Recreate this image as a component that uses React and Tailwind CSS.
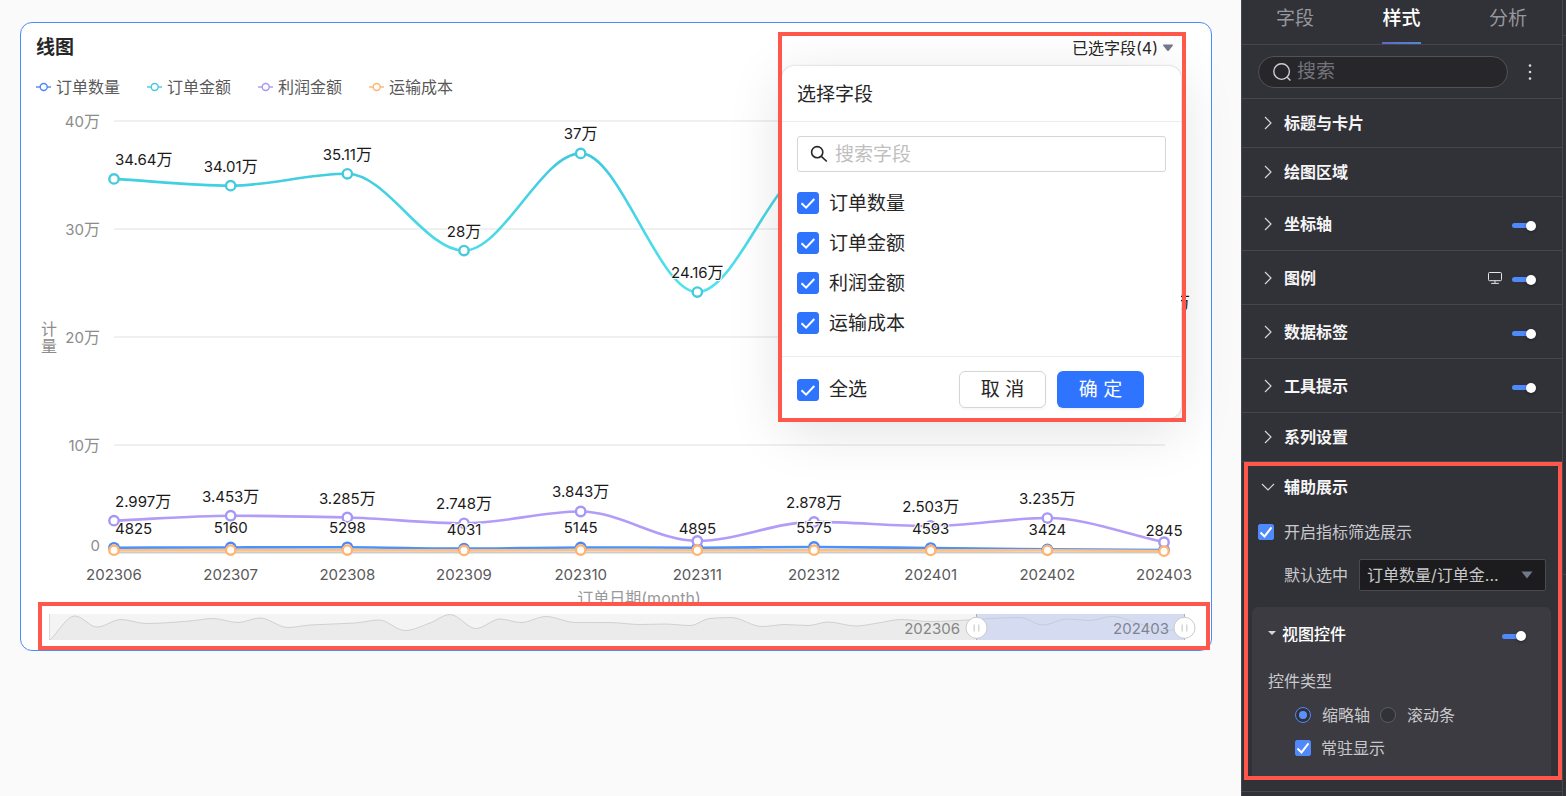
import React from "react";

const months = ["202306", "202307", "202308", "202309", "202310", "202311", "202312", "202401", "202402", "202403"];
const xAt = (i) => 114 + i * 116.67;
const yAt = (v) => 553 - v * 10.8;

const series = [
  {
    id: "orders",
    name: "订单数量",
    color: "#4c86fb",
    line: "#4b92ff",
    values: [0.4825, 0.516, 0.5298, 0.4031, 0.5145, 0.4895, 0.5575, 0.4593, 0.3424, 0.2845],
    labels: ["4825", "5160", "5298", "4031", "5145", "4895", "5575", "4593", "3424", "2845"],
  },
  {
    id: "amount",
    name: "订单金额",
    color: "#45cadc",
    line: "url(#amountLine)",
    values: [34.64, 34.01, 35.11, 28, 37, 24.16, 35.8, 30, 28, 21.4],
    labels: ["34.64万", "34.01万", "35.11万", "28万", "37万", "24.16万", "", "", "", "万"],
  },
  {
    id: "profit",
    name: "利润金额",
    color: "#a597f5",
    line: "#b39cf8",
    values: [2.997, 3.453, 3.285, 2.748, 3.843, 1.12, 2.878, 2.503, 3.235, 1.0],
    labels: ["2.997万", "3.453万", "3.285万", "2.748万", "3.843万", "", "2.878万", "2.503万", "3.235万", ""],
  },
  {
    id: "freight",
    name: "运输成本",
    color: "#ffb56f",
    line: "#ffc07f",
    values: [0.26, 0.27, 0.27, 0.24, 0.28, 0.26, 0.26, 0.24, 0.25, 0.17],
    labels: [],
  },
];

// Monotone cubic interpolation through the given points.
function curve(pts) {
  const n = pts.length;
  const d = [];
  for (let i = 0; i < n - 1; i++) d.push((pts[i + 1][1] - pts[i][1]) / (pts[i + 1][0] - pts[i][0]));
  const m = [d[0]];
  for (let i = 1; i < n - 1; i++) {
    m.push(d[i - 1] * d[i] <= 0 ? 0 : (2 * d[i - 1] * d[i]) / (d[i - 1] + d[i]));
  }
  m.push(d[n - 2]);
  let path = `M${pts[0][0]},${pts[0][1]}`;
  for (let i = 0; i < n - 1; i++) {
    const h = (pts[i + 1][0] - pts[i][0]) / 3;
    path += `C${pts[i][0] + h},${pts[i][1] + m[i] * h} ${pts[i + 1][0] - h},${pts[i + 1][1] - m[i + 1] * h} ${pts[i + 1][0]},${pts[i + 1][1]}`;
  }
  return path;
}

const overview = [
  [50, 640], [75, 616], [97, 627], [121, 619.5], [146, 623.5], [190, 621], [213, 618.5], [238, 622.5],
  [260, 618], [288, 627.5], [310, 625], [355, 623], [379, 620], [405, 630.5], [430, 623], [450, 614.5],
  [476, 628.5], [500, 619], [521, 622.5], [546, 616.5], [575, 622.5], [610, 622.6], [640, 624.5],
  [665, 624], [690, 625.5], [710, 618.5], [731, 617.5], [762, 626.5], [785, 624.5], [808, 625.5],
  [828, 622], [856, 626], [878, 623], [901, 619.5], [930, 621.5], [976, 619.5], [1000, 618],
  [1020, 617.5], [1043, 625], [1067, 619], [1090, 620.5], [1112, 616.5], [1140, 624], [1165, 630.5], [1185, 629],
];

// A figure with its unit character one size larger.
function Amount({ children }) {
  const [digits, rest] = String(children).split("万");
  return (
    <>
      {digits}
      {rest !== undefined && <tspan fontSize="16">万</tspan>}
    </>
  );
}

function Chart() {
  return (
    <svg viewBox="21 99 1190 503" className="block w-full overflow-visible" role="img" aria-label="线图">
      <defs>
        <linearGradient id="amountLine" gradientUnits="userSpaceOnUse" x1="0" y1="150" x2="0" y2="300">
          <stop offset="0" stopColor="#3ec9de" />
          <stop offset="1" stopColor="#4fe6ee" />
        </linearGradient>
      </defs>
      {[40, 30, 20, 10].map((v) => (
        <g key={v}>
          <line x1="114" x2="1165" y1={yAt(v)} y2={yAt(v)} stroke="#f0f0f0" strokeWidth="2" />
          <text x="100" y={yAt(v) + 6} textAnchor="end" fontSize="15" fill="#8c8c8c"><Amount>{`${v}万`}</Amount></text>
        </g>
      ))}
      <text x="100" y="551" textAnchor="end" fontSize="15" fill="#8c8c8c">0</text>
      <text x="49" y="335" textAnchor="middle" fontSize="16" fill="#8c8c8c">计</text>
      <text x="49" y="352" textAnchor="middle" fontSize="16" fill="#8c8c8c">量</text>
      <line x1="114" x2="1165" y1="552.5" y2="552.5" stroke="#cccccc" strokeWidth="2" />
      {series.map((s) => (
        <path key={s.id} d={curve(s.values.map((v, i) => [xAt(i), yAt(v)]))} fill="none" stroke={s.line} strokeWidth="2.6" />
      ))}
      {series.map((s) => (
        <g key={s.id} fill="#fff" stroke={s.color} strokeWidth="2.4">
          {s.values.map((v, i) => (
            <circle key={i} cx={xAt(i)} cy={yAt(v)} r="4.7" />
          ))}
        </g>
      ))}
      {series.map((s) => (
        <g key={s.id} fontSize="15" fill="#1a1a1a" stroke="#fff" strokeWidth="2" paintOrder="stroke" strokeLinejoin="round">
          {s.labels.map((t, i) => {
            const first = i === 0;
            const unit = t === "万";
            return (
              <text
                key={i}
                x={first ? 115 : unit ? 1190 : xAt(i)}
                y={yAt(s.values[i]) - 14}
                textAnchor={first ? "start" : unit ? "end" : "middle"}
              >
                <Amount>{t}</Amount>
              </text>
            );
          })}
        </g>
      ))}
      {months.map((m, i) => (
        <text key={m} x={xAt(i)} y="580" textAnchor="middle" fontSize="15" fill="#595959">{m}</text>
      ))}
      <text x="639" y="604" textAnchor="middle" fontSize="16" fill="#999">订单日期(month)</text>
    </svg>
  );
}

function RangeSlider() {
  const line = curve(overview);
  return (
    <div className="relative ml-[17px] mr-px border-4 border-[#ff574b] bg-white">
      <svg viewBox="42 606 1164 40" className="block w-full" aria-hidden="true">
        <rect x="49" y="614" width="1136" height="26" fill="#f4f4f4" />
        <path d={`${line}L1185,640L50,640Z`} fill="#ebebeb" />
        <line x1="49.5" x2="49.5" y1="614" y2="640" stroke="#d9d9d9" />
        <rect x="976" y="614" width="209" height="26" fill="#d5dcf2" />
        <path d={line} fill="none" stroke="#c4c6cc" strokeOpacity="0.75" strokeWidth="1" />
        {[976.5, 1184.5].map((x) => (
          <g key={x}>
            <line x1={x} x2={x} y1="614" y2="640" stroke="#aab0c0" />
            <circle cx={x} cy="627.8" r="10.5" fill="#fff" stroke="#cbcbcb" />
            <path d={`M${x - 2.3},624.5v7M${x + 2.3},624.5v7`} stroke="#cccccc" strokeWidth="1.2" />
          </g>
        ))}
        <text x="960" y="633.5" textAnchor="end" fontSize="15" fill="#868686">202306</text>
        <text x="1169" y="633.5" textAnchor="end" fontSize="15" fill="#7f8492">202403</text>
      </svg>
      <input type="range" aria-label="起始月份" defaultValue="80" className="absolute inset-0 h-full w-full cursor-pointer opacity-0" />
      <input type="range" aria-label="结束月份" defaultValue="100" className="absolute inset-0 h-full w-full cursor-pointer opacity-0" />
    </div>
  );
}

function FieldOption({ children }) {
  return (
    <label className="flex items-center gap-[10px]">
      <span className="grid size-[22px] shrink-0 place-items-center">
        <input type="checkbox" defaultChecked className="col-start-1 row-start-1 size-[22px] appearance-none rounded-[3px] border border-[#d0d0d0] checked:border-[#2f74ff] checked:bg-[#2f74ff]" />
        <svg viewBox="0 0 22 22" className="pointer-events-none col-start-1 row-start-1 size-[22px]" fill="none" stroke="#fff" strokeWidth="2">
          <path d="M4.5 11.2l4.6 4.4 8.2-8.6" />
        </svg>
      </span>
      <span className="pt-0.5">{children}</span>
    </label>
  );
}

function FieldPicker() {
  return (
    <div className="absolute right-[25px] top-[9px] w-[408px] p-1 text-[19px] text-[#262626]">
      <button type="button" className="ml-auto flex h-[30px] items-center gap-1 pr-2 pb-[6px] text-[16px]">
        已选字段(4)
        <svg viewBox="0 0 12 8" className="h-2 w-3" fill="#73798c">
          <path d="M1.5 .5h9q1 0 .4 .9l-4.2 5.3q-.7 .8-1.4 0L1.1 1.4q-.6-.9.4-.9z" />
        </svg>
      </button>
      <div className="mr-px rounded-t-xl rounded-br-xl bg-white shadow-[0_0_2px_rgba(0,0,0,0.25),0_12px_56px_rgba(0,0,0,0.12)]">
        <h2 className="border-b border-[#ececec] px-[15px] pt-0.5 leading-[53px]">选择字段</h2>
        <div className="px-[15px] pt-[14px] pb-[13px]">
          <div className="mb-[11px] flex h-9 items-center gap-[7px] rounded-[3px] border border-[#d5d5d5] pl-3">
            <svg viewBox="0 0 18 18" className="size-[18px]" fill="none" stroke="#262626" strokeWidth="1.6">
              <circle cx="7.2" cy="7.2" r="5.6" />
              <path d="M11.3 11.3l5.5 5.2" />
            </svg>
            <input type="text" aria-label="搜索字段" placeholder="搜索字段" className="min-w-0 flex-1 bg-transparent pt-0.5 outline-none placeholder:text-[#bfbfbf]" />
          </div>
          <ul>
            {series.map((s) => (
              <li key={s.id} className="grid h-10 items-center">
                <FieldOption>{s.name}</FieldOption>
              </li>
            ))}
          </ul>
        </div>
        <div className="flex items-center border-t border-[#ececec] pt-[14px] pr-[37px] pb-[10px] pl-[15px]">
          <div className="flex-1">
            <FieldOption>全选</FieldOption>
          </div>
          <button type="button" className="mr-[11px] h-[37px] w-[87px] rounded-md border border-[#d5d5d5] bg-white pt-0.5 shadow-[0_2px_2px_rgba(0,0,0,0.03)]">取 消</button>
          <button type="button" className="h-[37px] w-[87px] rounded-md bg-[#2f74ff] pt-0.5 text-white shadow-[0_2px_2px_rgba(0,0,0,0.05)]">确 定</button>
        </div>
      </div>
      <span className="pointer-events-none absolute inset-0 border-4 border-[#ff574b]" />
    </div>
  );
}

function Toggle({ label }) {
  return (
    <button type="button" role="switch" aria-checked="true" aria-label={label} className="mt-1 flex h-[10px] w-6 items-center">
      <span className="h-[5px] flex-1 rounded-l-full bg-[#5089fb]" />
      <span className="-ml-1 size-[10px] rounded-full bg-white shadow-[0_1px_3px_rgba(0,0,0,0.4)]" />
    </button>
  );
}

function Chevron({ open }) {
  return (
    <svg viewBox="0 0 14 14" className="size-[14px]" fill="none" stroke="#d6d6d8" strokeWidth="1.2">
      <path d={open ? "M1 4l6 6 6-6" : "M4 1l6 6-6 6"} />
    </svg>
  );
}

function SectionRow({ title, toggle, monitor }) {
  return (
    <div className={`flex items-center border-b border-[#47474b] pl-[19px] pr-[26px] ${toggle ? "h-[54px]" : "h-[49px]"}`}>
      <button type="button" className="flex flex-1 items-center gap-[9px] font-bold text-[#f5f5f6]">
        <Chevron />
        {title}
      </button>
      {monitor && (
        <svg viewBox="0 0 14 12" className="mr-[10px] h-3 w-[14px]" fill="none" stroke="#e6e6e8">
          <rect x=".5" y=".5" width="13" height="8.2" rx="1" />
          <path d="M7 8.7v2.4M3.2 11.4h7.6" />
        </svg>
      )}
      {toggle && <Toggle label={title} />}
    </div>
  );
}

function PanelCheck({ children }) {
  return (
    <label className="flex items-center gap-[10px]">
      <span className="grid size-4 place-items-center">
        <input type="checkbox" defaultChecked className="col-start-1 row-start-1 size-4 appearance-none rounded-[2px] border border-[#5b5b60] checked:border-[#5089fb] checked:bg-[#5089fb]" />
        <svg viewBox="0 0 16 16" className="pointer-events-none col-start-1 row-start-1 size-4" fill="none" stroke="#fff" strokeWidth="2">
          <path d="M2.5 8.5l4 3.9 7-9" />
        </svg>
      </span>
      {children}
    </label>
  );
}

function PanelRadio({ children, ...props }) {
  return (
    <label className="flex items-center gap-[11px]">
      <span className="grid size-4 place-items-center">
        <input type="radio" name="controlType" className="peer col-start-1 row-start-1 size-4 appearance-none rounded-full border border-[#5b5b60] bg-[#313138] checked:border-[#5089fb]" {...props} />
        <span className="pointer-events-none col-start-1 row-start-1 hidden size-2 rounded-full bg-[#5b90ff] peer-checked:block" />
      </span>
      {children}
    </label>
  );
}

function StylePanel() {
  return (
    <aside className="w-[322px] shrink-0 border-x border-[#47474b] bg-[#313138] text-[16px] text-[#c9c9cc]">
      <nav className="flex h-[45px] items-start justify-between border-b border-[#47474b] pl-[34px] pr-[35px] text-[19px] text-[#97979c]">
        <button type="button" className="h-[44px] pb-[5px]">字段</button>
        <button type="button" className="relative h-[44px] pb-[5px] font-medium text-white">
          样式
          <span className="absolute inset-x-0 bottom-0 h-[2px] bg-linear-to-r from-[#6465c8] to-[#4b8bd4]" />
        </button>
        <button type="button" className="h-[44px] pb-[5px]">分析</button>
      </nav>
      <div className="flex h-[54px] items-center border-b border-[#47474b] px-4">
        <div className="flex h-8 w-[250px] items-center gap-[6px] rounded-full border border-[#515156] bg-[#26262b] px-[14px] text-[19px]">
          <svg viewBox="0 0 18 18" className="size-[18px] shrink-0" fill="none" stroke="#cfcfd2" strokeWidth="1.4">
            <circle cx="8.6" cy="8.6" r="7.8" />
            <path d="M14.2 14.2l3.2 3.2" />
          </svg>
          <input type="text" aria-label="搜索" placeholder="搜索" className="min-w-0 flex-1 bg-transparent pt-0.5 outline-none placeholder:text-[#737378]" />
        </div>
        <button type="button" aria-label="更多" className="ml-[18px]">
          <svg viewBox="0 0 8 18" className="h-[18px] w-2" fill="#d6d6d8">
            <circle cx="4" cy="2.6" r="1.3" />
            <circle cx="4" cy="9" r="1.3" />
            <circle cx="4" cy="15.6" r="1.3" />
          </svg>
        </button>
      </div>
      <SectionRow title="标题与卡片" />
      <SectionRow title="绘图区域" />
      <SectionRow title="坐标轴" toggle />
      <SectionRow title="图例" toggle monitor />
      <SectionRow title="数据标签" toggle />
      <SectionRow title="工具提示" toggle />
      <SectionRow title="系列设置" />
      <div className="ml-0.5 border-4 border-[#ff574b]">
        <button type="button" className="flex h-[42px] w-full items-center gap-[9px] pl-[13px] font-bold text-[#f5f5f6]">
          <Chevron open />
          辅助展示
        </button>
        <div className="pt-3 pl-[10px]">
          <PanelCheck>开启指标筛选展示</PanelCheck>
        </div>
        <div className="mt-[15px] flex items-center gap-[11px] pr-3 pl-9">
          <label htmlFor="defaultFields">默认选中</label>
          <span className="grid flex-1 items-center">
            <select id="defaultFields" className="col-start-1 row-start-1 h-8 w-full appearance-none rounded-[2px] border border-[#4a4a4e] bg-[#1c1c1e] px-[7px]">
              <option>订单数量/订单金...</option>
            </select>
            <svg viewBox="0 0 12 8" className="pointer-events-none col-start-1 row-start-1 mr-[13px] h-2 w-3 justify-self-end" fill="#73798c">
              <path d="M.5 .5h11L6 7.5z" />
            </svg>
          </span>
        </div>
        <div className="ml-1 mr-[7px] mt-4 rounded-t-md bg-[#3b3b41] px-4 pb-4">
          <div className="flex h-[54px] items-center pr-[9px]">
            <button type="button" className="flex flex-1 items-center gap-[6px] font-medium text-white">
              <svg viewBox="0 0 8 8" className="size-2" fill="#d6d6d8">
                <path d="M0 1h8L4 5z" />
              </svg>
              视图控件
            </button>
            <Toggle label="视图控件" />
          </div>
          <fieldset>
            <legend className="pt-2 leading-6">控件类型</legend>
            <div className="flex items-center gap-[10px] pt-[10px] pl-[27px]">
              <PanelRadio defaultChecked>缩略轴</PanelRadio>
              <PanelRadio>滚动条</PanelRadio>
            </div>
          </fieldset>
          <div className="pt-[9px] pl-[27px]">
            <PanelCheck>常驻显示</PanelCheck>
          </div>
        </div>
      </div>
      <div className="h-3 border-b border-[#47474b]" />
    </aside>
  );
}

export default function App() {
  return (
    <div className="flex min-h-screen bg-[#fafafa] font-[Inter,'Noto_Sans_CJK_SC',sans-serif]">
      <main className="min-w-0 flex-1 pt-[22px] pr-[29px] pl-5">
        <section className="relative rounded-xl border border-[#4a8cff] bg-white">
          <h1 className="px-[15px] pt-[11px] text-[19px] leading-7 font-bold text-[#262626]">线图</h1>
          <ul className="mt-[13px] flex gap-[27px] px-[15px] text-[16px] leading-6 text-[#595959]">
            {series.map((s) => (
              <li key={s.id} className="flex items-center gap-[5px]">
                <svg viewBox="0 0 15 10" className="h-[10px] w-[15px]" fill="#fff" stroke={s.color}>
                  <path d="M0 5h15" strokeWidth="1.4" />
                  <circle cx="7.7" cy="5" r="3.5" strokeWidth="1.4" />
                </svg>
                {s.name}
              </li>
            ))}
          </ul>
          <Chart />
          <RangeSlider />
          <FieldPicker />
        </section>
      </main>
      <StylePanel />
      <div className="flex w-[3px] shrink-0 flex-col bg-[#313138]">
        <span className="h-9 border-b border-[#47474b]" />
        <span className="h-[539px] border-b border-[#47474b]" />
      </div>
    </div>
  );
}
